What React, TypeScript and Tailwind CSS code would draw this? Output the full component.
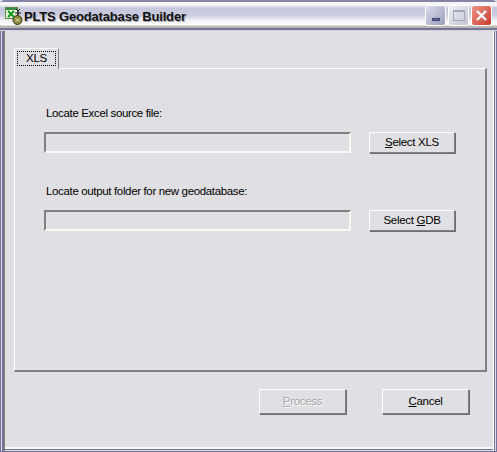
import React from "react";

function AppIcon() {
  return (
    <svg width="18" height="18" viewBox="0 0 18 18" className="mt-[1px] shrink-0">
      <rect x="0.5" y="0.5" width="12" height="11" fill="#f0f0dc" stroke="#5a8a48" />
      <rect x="1" y="1" width="11" height="2" fill="#3c8a3c" />
      <path d="M3 4l6 6M9 4l-6 6" stroke="#0c9a1c" strokeWidth="2" fill="none" />
      <path d="M11 2l2 2 2-2M13 4v4M10 6h6" stroke="#111" strokeWidth="1" fill="none" />
      <circle cx="12.5" cy="13" r="4.5" fill="#8c8c3c" stroke="#34340f" />
      <path d="M10.5 11.5l4 3M14.5 11.5l-4 3" stroke="#d8d8a0" strokeWidth="1" fill="none" />
    </svg>
  );
}

function WinButton({ kind }: { kind: "min" | "max" | "close" }) {
  const tone =
    kind === "close"
      ? "bg-gradient-to-br from-[#ec9488] to-[#c8362c]"
      : kind === "min"
        ? "bg-gradient-to-br from-[#dcdeec] to-[#9a9dbc]"
        : "bg-gradient-to-br from-[#eeeef4] to-[#c4c5d6]";
  return (
    <div className={`flex h-[21px] w-[21px] items-center justify-center rounded-[3px] border border-white ${tone}`}>
      {kind === "min" && <div className="mt-[8px] h-[3px] w-[8px] border border-[#3c3f70] bg-[#6c6f98]" />}
      {kind === "max" && <div className="h-[11px] w-[12px] border border-[#a4a6bc] border-t-2" />}
      {kind === "close" && (
        <svg width="13" height="13" viewBox="0 0 13 13">
          <path d="M2 2l9 9M11 2l-9 9" stroke="#fff" strokeWidth="2.4" />
        </svg>
      )}
    </div>
  );
}

function ClassicButton({
  children,
  disabled,
  className,
}: {
  children: React.ReactNode;
  disabled?: boolean;
  className: string;
}) {
  return (
    <button
      className={`${className} border border-t-white border-l-white border-r-[#808080] border-b-[#808080] shadow-[1px_1px_0_#6e6e6e] text-[11.5px] tracking-[-0.3px] ${
        disabled ? "text-[#a6a5a8] [text-shadow:1px_1px_0_#fff]" : "text-black"
      }`}
    >
      {children}
    </button>
  );
}

function PathRow({ label, children }: { label: string; children: React.ReactNode }) {
  return (
    <div className="flex flex-col">
      <div className="ml-[31px] h-[14px] text-[11.5px] leading-[14px] tracking-[-0.35px]">{label}</div>
      <div className="mt-[12px] ml-[29px] flex items-start">
        <div className="h-[21px] w-[307px] border-2 border-t-[#808080] border-l-[#808080] border-r-[#f8f8f0] border-b-[#f8f8f0]" />
        {children}
      </div>
    </div>
  );
}

export default function App() {
  return (
    <div className="flex h-[452px] w-[497px] flex-col bg-[#e0dfe3] font-['Liberation_Sans',sans-serif] text-black">
      {/* title bar */}
      <div className="flex h-[31px] shrink-0 items-center rounded-t-[5px] bg-[linear-gradient(#8584a6_0_2px,#f6f6fa_2px_5px,#c6c6dc_8px,#cacae0_15px,#f4f4f8_21px,#ffffff_25px,#b8b8b0_26px_28px,#75749a_28px_30px,#d4d4d8_30px)] pb-[1px] pl-[5px] pr-[5px]">
        <AppIcon />
        <div className="ml-[1px] mt-[2px] text-[13px] font-bold leading-none tracking-[-0.17px] text-[#111] [text-shadow:1px_1px_0_#a8a8b4]">
          PLTS Geodatabase Builder
        </div>
        <div className="ml-auto flex gap-[2px]">
          <WinButton kind="min" />
          <WinButton kind="max" />
          <WinButton kind="close" />
        </div>
      </div>

      {/* window frame */}
      <div className="flex flex-1 flex-col border border-t-0 border-[#75749a] px-[3px] pb-[3px] shadow-[inset_1px_0_0_#dcdce6,inset_3px_0_0_#75749a,inset_4px_0_0_#808068,inset_-1px_0_0_#dcdce6,inset_-2px_0_0_#75749a,inset_-3px_0_0_#fff,inset_0_-1px_0_#dcdce6,inset_0_-2px_0_#75749a,inset_0_-4px_0_#fafaf4]">
        {/* tab strip */}
        <div className="ml-[10px] mt-[17px] flex h-[20px] shrink-0">
          <div className="relative z-10 h-[21px] w-[45px] rounded-t-[2px] border border-b-0 border-t-white border-l-white border-r-[#808080] bg-[#e0dfe3] p-[2px]">
            <div className="flex h-[15px] items-center justify-center border border-dotted border-black text-[11.5px] leading-none tracking-[-0.3px]">
              XLS
            </div>
          </div>
        </div>

        {/* tab panel */}
        <div className="ml-[10px] mr-[6px] h-[304px] shrink-0 border-2 border-t border-l border-t-white border-l-white border-r-[#808080] border-b-[#808080] pt-[37px]">
          <PathRow label="Locate Excel source file:">
            <ClassicButton className="ml-[18px] h-[21px] w-[86px]">
              <span className="underline">S</span>elect XLS
            </ClassicButton>
          </PathRow>
          <div className="mt-[31px]">
            <PathRow label="Locate output folder for new geodatabase:">
              <ClassicButton className="ml-[18px] h-[21px] w-[86px]">
                Select <span className="underline">G</span>DB
              </ClassicButton>
            </PathRow>
          </div>
        </div>

        {/* footer buttons */}
        <div className="mt-[17px] flex justify-end gap-[36px] pr-[24px]">
          <ClassicButton disabled className="h-[25px] w-[87px]">
            <span className="underline">P</span>rocess
          </ClassicButton>
          <ClassicButton className="h-[25px] w-[87px]">
            <span className="underline">C</span>ancel
          </ClassicButton>
        </div>
      </div>
    </div>
  );
}
